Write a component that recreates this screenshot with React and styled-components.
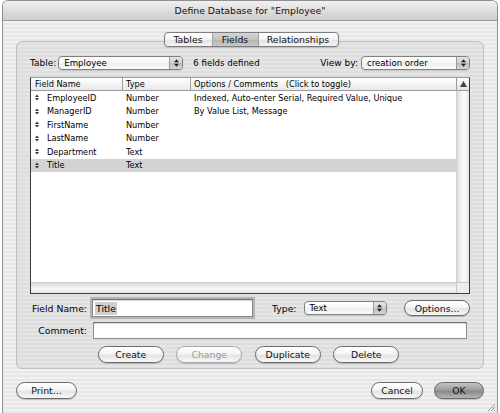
import React from "react";
import styled, { createGlobalStyle, css } from "styled-components";

const GlobalStyle = createGlobalStyle`
  html, body { margin: 0; padding: 0; background: #ffffff; }
  body { font-family: "DejaVu Sans", "Liberation Sans", sans-serif; font-size: 8.2px; color: #000; }
  * { box-sizing: border-box; }
`;

const Window = styled.div`
  width: 496px;
  height: 413px;
  margin-left: 2px;
  border: 1px solid #8f8f8f;
  border-bottom: none;
  border-radius: 6px 6px 0 0;
  background: repeating-linear-gradient(180deg, #f0f0f0 0 2px, #e7e7e7 2px 4px);
  display: flex;
  flex-direction: column;
  overflow: hidden;
  position: relative;
`;

const TitleBar = styled.div`
  height: 20px;
  flex: none;
  display: flex;
  align-items: center;
  justify-content: center;
  font-size: 9.3px;
  color: #111;
  background: linear-gradient(180deg, #f1f1f1 0%, #dcdcdc 55%, #cdcdcd 100%);
  border-bottom: 1px solid #9c9c9c;
`;

const Content = styled.div`
  flex: 1;
  display: flex;
  flex-direction: column;
  padding: 11px 13px 0 13px;
`;

const TabsRow = styled.div`
  display: flex;
  justify-content: center;
  margin-bottom: -6px;
  position: relative;
  z-index: 1;
  padding-left: 2px;
`;

const Segmented = styled.div`
  display: flex;
  height: 15px;
  border: 1px solid #7c7c7c;
  border-radius: 4px;
  overflow: hidden;
  background: linear-gradient(180deg, #ffffff 0%, #f2f2f2 50%, #e3e3e3 51%, #f4f4f4 100%);
  box-shadow: 0 1px 1px rgba(0,0,0,0.15);
`;

const Segment = styled.div`
  width: ${p => p.$w}px;
  display: flex;
  align-items: center;
  justify-content: center;
  font-size: 9.4px;
  color: #111;
  & + & { border-left: 1px solid #a2a2a2; }
  ${p => p.$active && css`
    background: linear-gradient(180deg, #d6d6d6 0%, #c3c3c3 50%, #b3b3b3 51%, #c8c8c8 100%);
  `}
`;

const GroupBox = styled.div`
  height: 328px;
  border: 1px solid #bdbdbd;
  border-radius: 6px;
  background: rgba(0, 0, 0, 0.045);
  padding: 14px 13px 0 13px;
  display: flex;
  flex-direction: column;
`;

const TopRow = styled.div`
  height: 14px;
  display: flex;
  align-items: center;
  margin-bottom: 7px;
`;

const Label = styled.span`
  white-space: nowrap;
  font-size: ${p => p.$fs || 9.3}px;
  ${p => p.$w && css`width: ${p.$w}px; text-align: right; flex: none;`}
  margin-right: ${p => p.$mr || 0}px;
  margin-left: ${p => p.$ml || 0}px;
`;

const Spacer = styled.div`flex: 1;`;

const Popup = styled.div`
  width: ${p => p.$w}px;
  height: 14px;
  flex: none;
  border: 1px solid #808080;
  border-radius: 4px;
  display: flex;
  align-items: stretch;
  background: linear-gradient(180deg, #ffffff 0%, #f6f6f6 50%, #ececec 51%, #fafafa 100%);
  box-shadow: 0 1px 1px rgba(0,0,0,0.12);
  overflow: hidden;
`;

const PopupText = styled.div`
  flex: 1;
  display: flex;
  align-items: center;
  padding-left: 5px;
  font-size: 8.6px;
`;

const PopupArrows = styled.div`
  width: 13px;
  flex: none;
  display: flex;
  align-items: center;
  justify-content: center;
  border-left: 1px solid #9a9a9a;
  background: linear-gradient(180deg, #e4e4e4 0%, #cfcfcf 50%, #bcbcbc 51%, #d6d6d6 100%);
`;

const UpDown = ({ w = 5, h = 8, color = "#222" }) => (
  <svg width={w} height={h} viewBox="0 0 5 8">
    <polygon points="0,3.3 2.5,0.3 5,3.3" fill={color} />
    <polygon points="0,4.7 2.5,7.7 5,4.7" fill={color} />
  </svg>
);

const List = styled.div`
  height: 217px;
  border: 1px solid #3c3c3c;
  border-top-color: #9a9a9a;
  background: #fff;
  display: grid;
  grid-template-columns: 1fr 13px;
  grid-template-rows: 13px 1fr 11px;
`;

const ListHeader = styled.div`
  display: grid;
  grid-template-columns: 91px 68px 1fr;
  background: linear-gradient(180deg, #ffffff 0%, #f4f4f4 50%, #e8e8e8 100%);
  border-bottom: 1px solid #9a9a9a;
`;

const HeaderCell = styled.div`
  display: flex;
  align-items: center;
  padding-left: ${p => p.$pl || 3}px;
  white-space: nowrap;
  & + & { border-left: 1px solid #a0a0a0; }
`;

const HeaderCorner = styled.div`
  border-left: 1px solid #9a9a9a;
  border-bottom: 1px solid #9a9a9a;
  background: linear-gradient(180deg, #ffffff 0%, #f0f0f0 50%, #e4e4e4 100%);
  display: flex;
  align-items: center;
  justify-content: center;
`;

const Rows = styled.div`
  display: flex;
  flex-direction: column;
`;

const Row = styled.div`
  height: 13.5px;
  display: grid;
  grid-template-columns: 91px 68px 1fr;
  align-items: center;
  background: ${p => p.$selected ? "#d3d3d3" : "transparent"};
`;

const NameCell = styled.div`
  display: flex;
  align-items: center;
  padding-left: 4px;
  gap: 8px;
  white-space: nowrap;
`;

const Cell = styled.div`
  padding-left: 4px;
  white-space: nowrap;
  overflow: hidden;
`;

const VTrack = styled.div`
  border-left: 1px solid #d0d0d0;
  background: linear-gradient(90deg, #dadada 0%, #f2f2f2 35%, #fbfbfb 60%, #e6e6e6 100%);
`;

const HTrack = styled.div`
  border-top: 1px solid #d0d0d0;
  background: linear-gradient(180deg, #dcdcdc 0%, #efefef 40%, #f6f6f6 60%, #e2e2e2 100%);
`;

const CornerBox = styled.div`
  border-top: 1px solid #c8c8c8;
  border-left: 1px solid #c8c8c8;
  background: #ececec;
`;

const FormRow = styled.div`
  display: flex;
  align-items: center;
  margin-top: ${p => p.$mt}px;
  height: ${p => p.$h}px;
`;

const TextField = styled.div`
  width: ${p => p.$w}px;
  height: ${p => p.$h}px;
  flex: none;
  background: #fff;
  border: 1px solid #8a8a8a;
  border-top-color: #6e6e6e;
  box-shadow: inset 0 1px 1px rgba(0,0,0,0.15)${p => p.$focus ? ", 0 0 0 2px #b4b4b4" : ""};
  display: flex;
  align-items: center;
  padding-left: 2px;
  font-size: 9.3px;
`;

const Selected = styled.span`
  background: #cfcfcf;
  padding: 1px 1px;
`;

const Button = styled.div`
  width: ${p => p.$w}px;
  height: ${p => p.$h || 17}px;
  flex: none;
  border-radius: 9px;
  border: 1px solid ${p => p.$disabled ? "#a8a8a8" : "#6a6a6a"};
  display: flex;
  align-items: center;
  justify-content: center;
  font-size: 9.3px;
  color: ${p => p.$disabled ? "#9c9c9c" : "#111"};
  background: ${p => p.$default
    ? "linear-gradient(180deg, #c4c4c4 0%, #9d9d9d 45%, #8a8a8a 55%, #b5b5b5 100%)"
    : "linear-gradient(180deg, #ffffff 0%, #f5f5f5 45%, #e4e4e4 55%, #f7f7f7 100%)"};
  box-shadow: 0 1px 1px rgba(0,0,0,0.18);
`;

const ButtonRow = styled.div`
  display: flex;
  justify-content: center;
  gap: 12.5px;
  margin-top: 7px;
  padding-right: 3px;
`;

const Footer = styled.div`
  display: flex;
  align-items: center;
  margin-top: 13px;
  gap: 11px;
`;

const Grip = styled.div`
  position: absolute;
  right: 1px;
  bottom: 1px;
  width: 9px;
  height: 9px;
`;

const rows = [
  ["EmployeeID", "Number", "Indexed, Auto-enter Serial, Required Value, Unique"],
  ["ManagerID", "Number", "By Value List, Message"],
  ["FirstName", "Number", ""],
  ["LastName", "Number", ""],
  ["Department", "Text", ""],
  ["Title", "Text", ""],
];

export default function App() {
  return (
    <>
      <GlobalStyle />
      <Window>
        <TitleBar>Define Database for "Employee"</TitleBar>
        <Content>
          <TabsRow>
            <Segmented>
              <Segment $w={47}>Tables</Segment>
              <Segment $w={46} $active>Fields</Segment>
              <Segment $w={80}>Relationships</Segment>
            </Segmented>
          </TabsRow>
          <GroupBox>
            <TopRow>
              <Label $fs={9} $mr={2}>Table:</Label>
              <Popup $w={125}>
                <PopupText>Employee</PopupText>
                <PopupArrows><UpDown /></PopupArrows>
              </Popup>
              <Label $fs={8.6} $ml={10}>6 fields defined</Label>
              <Spacer />
              <Label $fs={9} $mr={3}>View by:</Label>
              <Popup $w={109}>
                <PopupText>creation order</PopupText>
                <PopupArrows><UpDown /></PopupArrows>
              </Popup>
            </TopRow>
            <List>
              <ListHeader>
                <HeaderCell $pl={4}>Field Name</HeaderCell>
                <HeaderCell>Type</HeaderCell>
                <HeaderCell>Options / Comments&nbsp;&nbsp;&nbsp;(Click to toggle)</HeaderCell>
              </ListHeader>
              <HeaderCorner>
                <svg width="7" height="6" viewBox="0 0 7 6">
                  <polygon points="0,6 3.5,0 7,6" fill="#444" />
                </svg>
              </HeaderCorner>
              <Rows>
                {rows.map(([n, t, o]) => (
                  <Row key={n} $selected={n === "Title"}>
                    <NameCell>
                      <UpDown w={4} h={7} color="#333" />
                      <span>{n}</span>
                    </NameCell>
                    <Cell>{t}</Cell>
                    <Cell>{o}</Cell>
                  </Row>
                ))}
              </Rows>
              <VTrack />
              <HTrack />
              <CornerBox />
            </List>
            <FormRow $mt={5} $h={18}>
              <Label $w={57} $mr={5}>Field Name:</Label>
              <TextField $w={161} $h={18} $focus>
                <Selected>Title</Selected>
              </TextField>
              <Label $ml={19} $mr={7}>Type:</Label>
              <Popup $w={83}>
                <PopupText>Text</PopupText>
                <PopupArrows><UpDown /></PopupArrows>
              </Popup>
              <Spacer />
              <Button $w={66} $h={16}>Options...</Button>
            </FormRow>
            <FormRow $mt={5} $h={17}>
              <Label $w={57} $mr={6}>Comment:</Label>
              <TextField $w={374} $h={17} />
            </FormRow>
            <ButtonRow>
              <Button $w={66}>Create</Button>
              <Button $w={66} $disabled>Change</Button>
              <Button $w={66}>Duplicate</Button>
              <Button $w={66}>Delete</Button>
            </ButtonRow>
          </GroupBox>
          <Footer>
            <Button $w={61}>Print...</Button>
            <Spacer />
            <Button $w={52}>Cancel</Button>
            <Button $w={50} $default>OK</Button>
          </Footer>
        </Content>
        <Grip>
          <svg width="9" height="9" viewBox="0 0 9 9">
            <line x1="8" y1="1" x2="1" y2="8" stroke="#9a9a9a" />
            <line x1="8" y1="4" x2="4" y2="8" stroke="#9a9a9a" />
            <line x1="8" y1="7" x2="7" y2="8" stroke="#9a9a9a" />
          </svg>
        </Grip>
      </Window>
    </>
  );
}
